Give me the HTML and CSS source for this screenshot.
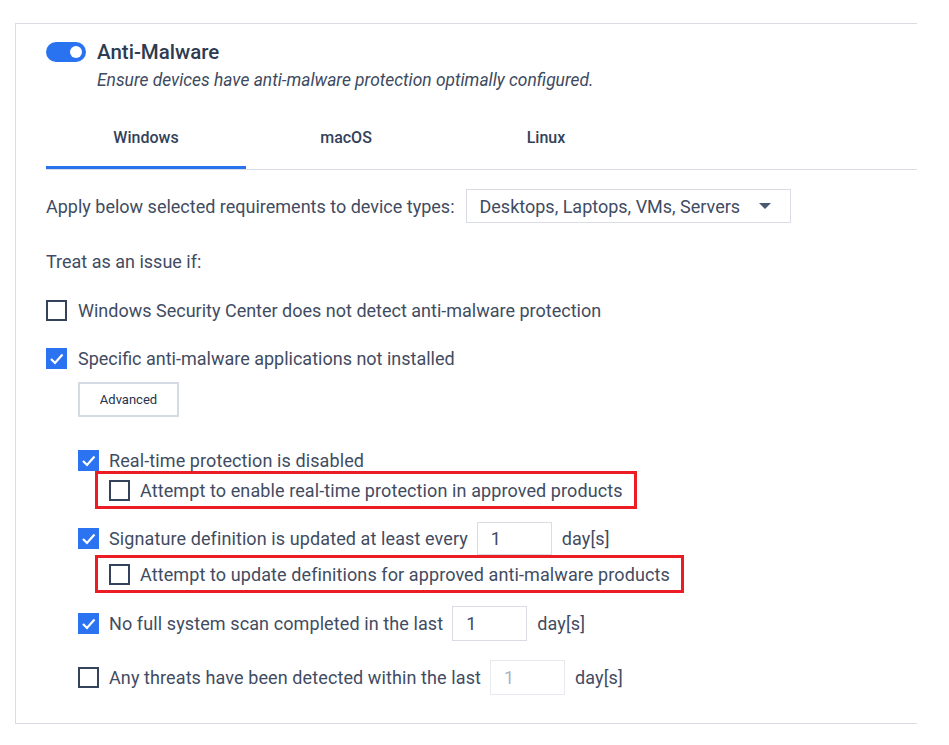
FILE: index.html
```html
<!DOCTYPE html>
<html>
<head>
<meta charset="utf-8">
<link rel="stylesheet" href="styles.css">
</head>
<body>
<div class="card">
  <div class="head">
    <span class="toggle"><span class="knob"></span></span>
    <span class="title">Anti-Malware</span>
  </div>
  <div class="subtitle">Ensure devices have anti-malware protection optimally configured.</div>

  <div class="tabs">
    <div class="tab active">Windows</div>
    <div class="tab">macOS</div>
    <div class="tab">Linux</div>
  </div>

  <div class="apply">
    <span>Apply below selected requirements to device types:</span>
    <div class="select">
      <span>Desktops, Laptops, VMs, Servers</span>
      <svg class="caret" width="12" height="6" viewBox="0 0 12 6"><path d="M0 0h12L6 6z" fill="#4a5870"/></svg>
    </div>
  </div>

  <div class="treat">Treat as an issue if:</div>

  <div class="row r1">
    <span class="cb"></span>
    <span>Windows Security Center does not detect anti-malware protection</span>
  </div>

  <div class="row r2">
    <span class="cb on"><svg width="21" height="21" viewBox="0 0 21 21"><path d="M5 11l4 4 7.5-8.5" fill="none" stroke="#fff" stroke-width="2.2"/></svg></span>
    <span>Specific anti-malware applications not installed</span>
  </div>

  <div class="nested">
    <button class="adv">Advanced</button>

    <div class="row r3">
      <span class="cb on"><svg width="21" height="21" viewBox="0 0 21 21"><path d="M5 11l4 4 7.5-8.5" fill="none" stroke="#fff" stroke-width="2.2"/></svg></span>
      <span>Real-time protection is disabled</span>
    </div>
    <div class="mark">
      <span class="cb"></span>
      <span>Attempt to enable real-time protection in approved products</span>
    </div>

    <div class="row r4">
      <span class="cb on"><svg width="21" height="21" viewBox="0 0 21 21"><path d="M5 11l4 4 7.5-8.5" fill="none" stroke="#fff" stroke-width="2.2"/></svg></span>
      <span>Signature definition is updated at least every</span>
      <span class="num">1</span>
      <span>day[s]</span>
    </div>
    <div class="mark">
      <span class="cb"></span>
      <span>Attempt to update definitions for approved anti-malware products</span>
    </div>

    <div class="row r5">
      <span class="cb on"><svg width="21" height="21" viewBox="0 0 21 21"><path d="M5 11l4 4 7.5-8.5" fill="none" stroke="#fff" stroke-width="2.2"/></svg></span>
      <span>No full system scan completed in the last</span>
      <span class="num">1</span>
      <span>day[s]</span>
    </div>

    <div class="row r6">
      <span class="cb"></span>
      <span>Any threats have been detected within the last</span>
      <span class="num dis">1</span>
      <span>day[s]</span>
    </div>
  </div>
</div>
</body>
</html>
```
FILE: styles.css
```css
* { box-sizing: border-box; }
body {
  margin: 0;
  background: #fff;
  font-family: Roboto, "Liberation Sans", sans-serif;
  color: #3f4c62;
  font-size: 18px;
}
.card {
  margin: 23px 0 0 15px;
  width: 902px;
  border-top: 1px solid #d9dce4;
  border-left: 1px solid #d9dce4;
  border-bottom: 1px solid #d9dce4;
  padding: 18px 0 29px 30px;
  height: 701px;
}
.head {
  display: flex;
  align-items: center;
  gap: 11px;
  height: 20px;
}
.toggle {
  width: 40px;
  height: 20px;
  border-radius: 10px;
  background: #2a73f0;
  display: flex;
  align-items: center;
  justify-content: flex-end;
  padding-right: 4px;
}
.knob {
  width: 12px;
  height: 12px;
  border-radius: 50%;
  background: #fff;
}
.title {
  font-size: 20.5px;
  font-weight: 500;
  color: #2e3b50;
  line-height: 20px;
}
.subtitle {
  margin: 8px 0 0 51px;
  font-style: italic;
  font-size: 17.4px;
  line-height: 20px;
  color: #3d4a60;
}
.tabs {
  margin-top: 15px;
  display: flex;
  border-bottom: 1px solid #d9dce4;
}
.tab {
  width: 200px;
  height: 64px;
  display: flex;
  align-items: center;
  justify-content: center;
  font-weight: 500;
  font-size: 16px;
  color: #33425a;
}
.tab.active {
  box-shadow: inset 0 -3px 0 #2a73f0;
}
.apply {
  margin-top: 19px;
  display: flex;
  align-items: center;
  gap: 11px;
}
.select {
  width: 325px;
  height: 34px;
  border: 1px solid #d9dce4;
  display: flex;
  align-items: center;
  padding: 0 19px 0 13px;
  justify-content: space-between;
}
.treat {
  margin-top: 29px;
  line-height: 20px;
}
.row {
  display: flex;
  align-items: center;
  gap: 10px;
}
.nested .row, .mark { letter-spacing: 0.1px; }
.cb {
  width: 21px;
  height: 21px;
  border: 2px solid #34435b;
  flex: none;
  display: block;
}
.cb.on {
  border: none;
  background: #2b73f1;
}
.cb svg { display: block; }
.r1 { margin-top: 28px; gap: 11px; }
.r2 { margin-top: 27px; gap: 11px; }
.nested { margin-left: 32px; }
.adv {
  margin-top: 13px;
  width: 101px;
  height: 35px;
  border: 2px solid #d5dbe5;
  background: #fff;
  font-family: inherit;
  font-size: 13px;
  color: #26324a;
  padding: 0;
  display: block;
}
.r3 { margin-top: 33px; }
.mark {
  margin-left: 17px;
  display: inline-flex;
  align-items: center;
  gap: 10px;
  border: 3px solid #ec1c24;
  padding: 4px 11px 4px 11px;
  height: 38px;
}
.r4 { margin-top: 13px; }
.r4 .num { height: 33px; }
.r5 { margin-top: 13px; }
.r6 { margin-top: 19px; }
.num {
  width: 75px;
  height: 35px;
  border: 1px solid #d9dce4;
  padding: 0 0 0 13px;
  display: flex;
  align-items: center;
  margin-left: -1px;
}
.num.dis {
  border-color: #e6e9ee;
  color: #a9b4c6;
}
```
